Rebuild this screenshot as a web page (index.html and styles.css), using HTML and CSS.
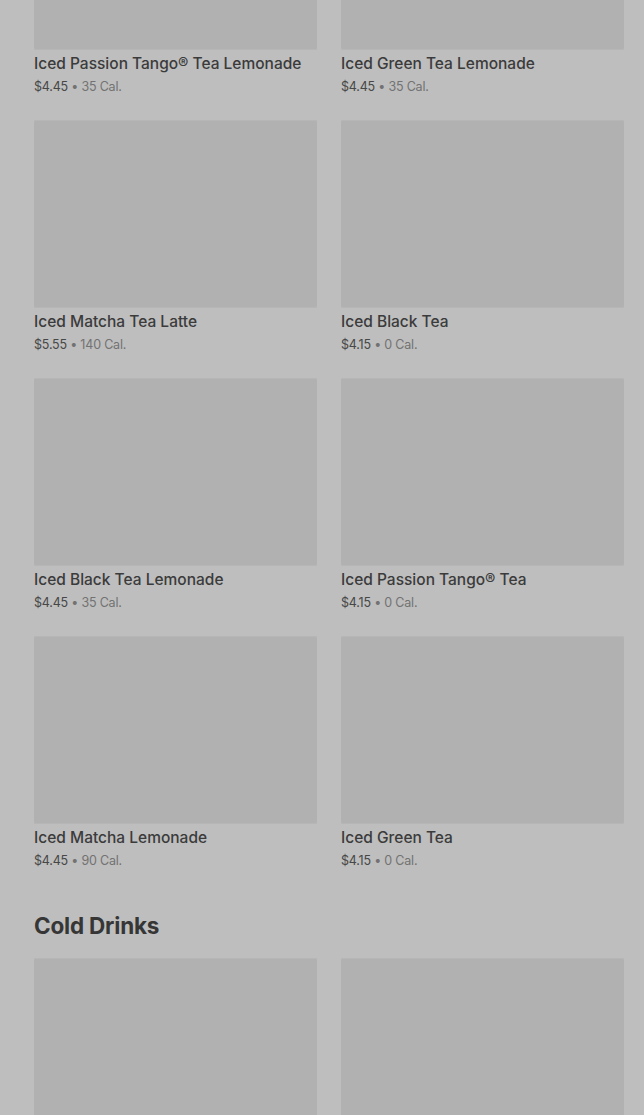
FILE: index.html
```html
<!DOCTYPE html>
<html lang="en">
<head>
  <meta charset="UTF-8">
  <meta name="viewport" content="width=device-width, initial-scale=1">
  <title>Menu – Iced Teas</title>
  <link rel="stylesheet" href="styles.css">
</head>
<body>

<div class="menu">
  <div class="product-grid">
    <div class="product">
      <div class="thumb"></div>
      <div class="name">Iced Passion Tango® Tea Lemonade</div>
      <div class="meta"><span class="price">$4.45</span> • 35 Cal.</div>
    </div>
    <div class="product">
      <div class="thumb"></div>
      <div class="name">Iced Green Tea Lemonade</div>
      <div class="meta"><span class="price">$4.45</span> • 35 Cal.</div>
    </div>
    <div class="product">
      <div class="thumb"></div>
      <div class="name">Iced Matcha Tea Latte</div>
      <div class="meta"><span class="price">$5.55</span> • 140 Cal.</div>
    </div>
    <div class="product">
      <div class="thumb"></div>
      <div class="name">Iced Black Tea</div>
      <div class="meta"><span class="price">$4.15</span> • 0 Cal.</div>
    </div>
    <div class="product">
      <div class="thumb"></div>
      <div class="name">Iced Black Tea Lemonade</div>
      <div class="meta"><span class="price">$4.45</span> • 35 Cal.</div>
    </div>
    <div class="product">
      <div class="thumb"></div>
      <div class="name">Iced Passion Tango® Tea</div>
      <div class="meta"><span class="price">$4.15</span> • 0 Cal.</div>
    </div>
    <div class="product">
      <div class="thumb"></div>
      <div class="name">Iced Matcha Lemonade</div>
      <div class="meta"><span class="price">$4.45</span> • 90 Cal.</div>
    </div>
    <div class="product">
      <div class="thumb"></div>
      <div class="name">Iced Green Tea</div>
      <div class="meta"><span class="price">$4.15</span> • 0 Cal.</div>
    </div>
  </div>

  <h2 class="section-title">Cold Drinks</h2>

  <div class="product-grid">
    <div class="product">
      <div class="thumb"></div>
    </div>
    <div class="product">
      <div class="thumb"></div>
    </div>
  </div>
</div>

</body>
</html>
```

FILE: styles.css
```css
body {
  margin: 0;
  background-color: #bebebe;
  font-family: Inter, "Noto Sans", sans-serif;
  color: #3a3a3a;
  overflow: hidden;
}
.menu {
  margin-top: -138px;
  padding: 0 20px 0 34px;
}
.product-grid {
  display: grid;
  grid-template-columns: 283px 283px;
  column-gap: 24px;
  row-gap: 23px;
}
.thumb {
  height: 188px;
  background-color: #b1b1b1;
  border-radius: 2px;
  box-shadow: inset 0 1px 0 #b6b6b6, inset 0 -1px 0 #b6b6b6;
}
.name {
  margin-top: 2px;
  font-size: 15.5px;
  line-height: 24px;
  font-weight: 500;
  color: #3b3b3b;
  white-space: nowrap;
}
.meta {
  padding-top: 1px;
  font-size: 12.5px;
  line-height: 20px;
  letter-spacing: -0.2px;
  color: #727272;
}
.price {
  color: #474747;
}
.section-title {
  margin: 39px 0 16px;
  font-size: 22.5px;
  line-height: 32px;
  font-weight: 700;
  letter-spacing: -0.2px;
  color: #363636;
}
```
